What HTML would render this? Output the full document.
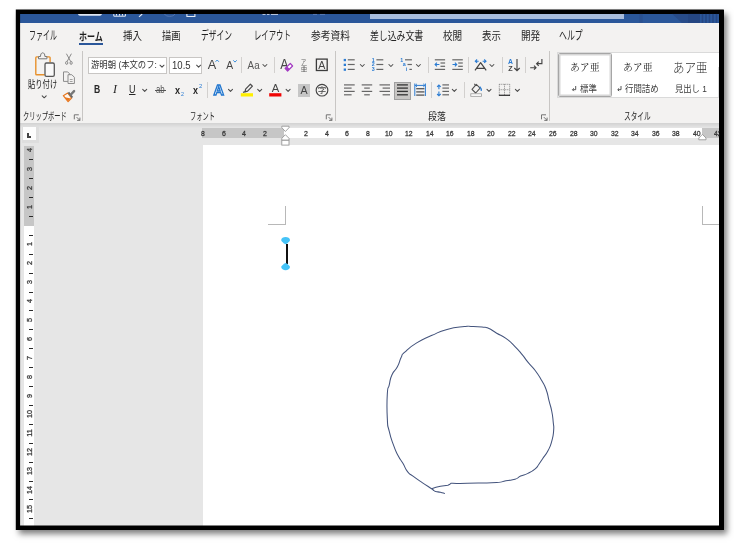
<!DOCTYPE html>
<html lang="ja"><head><meta charset="utf-8"><title>Word</title>
<style>
html,body{margin:0;padding:0;background:#fff;}
body{width:734px;height:545px;overflow:hidden;}
#root{position:relative;width:734px;height:545px;overflow:hidden;background:#fff;will-change:transform;filter:blur(.4px);}
#root div,#root span,#root svg{position:absolute;}
.t{white-space:nowrap;transform-origin:0 50%;color:#262626;display:block;}
.vsep{width:1px;background:#c8c6c4;}
.ui{font-family:"Liberation Sans","Noto Sans CJK JP",sans-serif;}
.serif{font-family:"Liberation Serif","Noto Serif CJK SC","Noto Sans CJK JP",serif;}
.vsep.s{background:#d2d0ce;}
.box{background:#fff;border:1px solid #c8c6c4;box-sizing:border-box;}
.vr{width:16px;height:8px;line-height:8px;font-size:7.2px;text-align:center;color:#3a3a3a;-webkit-text-stroke:.3px #3a3a3a;transform:rotate(-90deg);transform-origin:50% 50%;font-family:"Liberation Sans",sans-serif;display:block;}
#shadow{background:#000;box-shadow:2.5px 3.5px 6px rgba(0,0,0,.5);}
#win{background:#e6e6e6;}
#title{background:#2b579a;}
#search{background:#a9bcdb;}
#ribbon{background:#f3f2f1;}
#ribline{background:linear-gradient(#d2d2d2,#e6e6e6);}
#page{background:#fff;}

</style></head>
<body>
<div id="root">
<div id="shadow" style="left:15.8px;top:9.6px;width:708.0px;height:520.4px;"></div>
<div id="win" style="left:20.1px;top:13.8px;width:699.3px;height:511.8px;"></div>
<div id="title" style="left:20.1px;top:13.8px;width:699.3px;height:9.1px;"></div>
<div id="search" style="left:370px;top:13.8px;width:253.9px;height:5.4px;"></div>
<div id="ribbon" style="left:20.1px;top:22.9px;width:699.3px;height:100.1px;"></div>
<div id="ribline" style="left:20.1px;top:123px;width:699.3px;height:4.5px;"></div>
<div id="page" style="left:203px;top:144.8px;width:516.4px;height:380.8px;"></div>
<div style="left:79.1px;top:42.5px;width:24.2px;height:2.4px;background:#2b579a;"></div>
<div class="vsep" style="left:81.5px;top:50.5px;height:70px;"></div>
<div class="vsep" style="left:334.6px;top:50.5px;height:70px;"></div>
<div class="vsep" style="left:549.2px;top:50.5px;height:70px;"></div>
<div class="vsep s" style="left:241.2px;top:57.2px;height:15.7px;"></div>
<div class="vsep s" style="left:274.3px;top:57.2px;height:15.7px;"></div>
<div class="vsep s" style="left:428.2px;top:57.2px;height:15.7px;"></div>
<div class="vsep s" style="left:468.3px;top:57.2px;height:15.7px;"></div>
<div class="vsep s" style="left:502px;top:57.2px;height:15.7px;"></div>
<div class="vsep s" style="left:524.5px;top:57.2px;height:15.7px;"></div>
<div class="vsep s" style="left:207.2px;top:82.4px;height:15.8px;"></div>
<div class="vsep s" style="left:431.2px;top:82.4px;height:15.8px;"></div>
<div class="vsep s" style="left:464.2px;top:82.4px;height:15.8px;"></div>
<div class="box" style="left:88.3px;top:57px;width:78.5px;height:17.3px;"></div>
<div class="box" style="left:169px;top:57px;width:33.400px;height:17.3px;"></div>
<div style="left:154.8px;top:90.2px;width:11.6px;height:1px;background:#555;"></div>
<div style="left:394.2px;top:81.5px;width:16.4px;height:18px;background:#c8c6c4;border:1px solid #a0a0a0;box-sizing:border-box;"></div>
<div style="left:298.2px;top:84px;width:11.8px;height:12.6px;background:#c6c6c6;"></div>
<div style="left:557.4px;top:52px;width:162.0px;height:46px;background:#fff;border:1px solid #dadada;border-right:0;box-sizing:border-box;"></div>
<div style="left:558.3px;top:53px;width:53.5px;height:44.4px;border:1px solid #a6a6a6;border-radius:1.5px;box-shadow:inset 0 0 0 1.5px #d6d6d6;box-sizing:border-box;"></div>
<div style="left:717.8px;top:66.5px;width:1px;height:31px;background:#dcdcdc;"></div>
<div style="left:202px;top:128.1px;width:517.4px;height:10px;background:#fff;"></div>
<div style="left:202px;top:128.1px;width:82.4px;height:10px;background:#c6c6c6;"></div>
<div style="left:701.8px;top:128.1px;width:17.6px;height:10px;background:#c6c6c6;"></div>
<div style="left:21.8px;top:125.5px;width:17.1px;height:17px;background:#dedede;"></div>
<div style="left:22.8px;top:127.4px;width:13.1px;height:12.5px;background:#fdfdfd;"></div>
<div style="left:27.1px;top:132.7px;width:1.5px;height:4.9px;background:#444;"></div>
<div style="left:27.1px;top:136.1px;width:4.2px;height:1.5px;background:#444;"></div>
<div style="left:24px;top:145.6px;width:10px;height:380.0px;background:#fff;"></div>
<div style="left:24px;top:145.6px;width:10px;height:80.2px;background:#c6c6c6;"></div>
<span class="vr" style="left:22px;top:145.8px;">4</span>
<div style="left:28.8px;top:159px;width:3.8px;height:1px;background:#2a2a2a;"></div>
<span class="vr" style="left:22px;top:164.8px;">3</span>
<div style="left:28.8px;top:178px;width:3.8px;height:1px;background:#2a2a2a;"></div>
<span class="vr" style="left:22px;top:183.6px;">2</span>
<div style="left:28.8px;top:197px;width:3.8px;height:1px;background:#2a2a2a;"></div>
<span class="vr" style="left:22px;top:202.5px;">1</span>
<div style="left:28.8px;top:216px;width:3.8px;height:1px;background:#2a2a2a;"></div>
<span class="vr" style="left:22px;top:240.3px;">1</span>
<div style="left:28.8px;top:235px;width:3.8px;height:1px;background:#2a2a2a;"></div>
<span class="vr" style="left:22px;top:259.2px;">2</span>
<div style="left:28.8px;top:254px;width:3.8px;height:1px;background:#2a2a2a;"></div>
<span class="vr" style="left:22px;top:278.1px;">3</span>
<div style="left:28.8px;top:273px;width:3.8px;height:1px;background:#2a2a2a;"></div>
<span class="vr" style="left:22px;top:297.0px;">4</span>
<div style="left:28.8px;top:292px;width:3.8px;height:1px;background:#2a2a2a;"></div>
<span class="vr" style="left:22px;top:315.9px;">5</span>
<div style="left:28.8px;top:310px;width:3.8px;height:1px;background:#2a2a2a;"></div>
<span class="vr" style="left:22px;top:334.8px;">6</span>
<div style="left:28.8px;top:329px;width:3.8px;height:1px;background:#2a2a2a;"></div>
<span class="vr" style="left:22px;top:353.8px;">7</span>
<div style="left:28.8px;top:348px;width:3.8px;height:1px;background:#2a2a2a;"></div>
<span class="vr" style="left:22px;top:372.6px;">8</span>
<div style="left:28.8px;top:367px;width:3.8px;height:1px;background:#2a2a2a;"></div>
<span class="vr" style="left:22px;top:391.5px;">9</span>
<div style="left:28.8px;top:386px;width:3.8px;height:1px;background:#2a2a2a;"></div>
<span class="vr" style="left:22px;top:410.4px;">10</span>
<div style="left:28.8px;top:405px;width:3.8px;height:1px;background:#2a2a2a;"></div>
<span class="vr" style="left:22px;top:429.3px;">11</span>
<div style="left:28.8px;top:424px;width:3.8px;height:1px;background:#2a2a2a;"></div>
<span class="vr" style="left:22px;top:448.2px;">12</span>
<div style="left:28.8px;top:443px;width:3.8px;height:1px;background:#2a2a2a;"></div>
<span class="vr" style="left:22px;top:467.1px;">13</span>
<div style="left:28.8px;top:462px;width:3.8px;height:1px;background:#2a2a2a;"></div>
<span class="vr" style="left:22px;top:486.0px;">14</span>
<div style="left:28.8px;top:481px;width:3.8px;height:1px;background:#2a2a2a;"></div>
<span class="vr" style="left:22px;top:504.9px;">15</span>
<div style="left:28.8px;top:499px;width:3.8px;height:1px;background:#2a2a2a;"></div>
<div style="left:28.8px;top:518px;width:3.8px;height:1px;background:#2a2a2a;"></div>
<div style="left:285px;top:206px;width:1px;height:19px;background:#b8b8b8;"></div>
<div style="left:268px;top:224.3px;width:18px;height:1px;background:#b8b8b8;"></div>
<div style="left:702px;top:206px;width:1px;height:19px;background:#b8b8b8;"></div>
<div style="left:702px;top:224.3px;width:17.4px;height:1px;background:#b8b8b8;"></div>
<div style="left:285.6px;top:243.5px;width:2px;height:20.5px;background:#111;"></div>
<svg style="left:279px;top:235px;" width="14" height="38" viewBox="0 0 14 38"><path d="M2.200 5.100C2.200 3 4.400 2 6.600 2s4.400 1 4.400 3.100c0 1.300-1.600 2-2.700 3.300L6.600 9.300 4.900 8.400C3.800 7.100 2.200 6.400 2.200 5.100z" fill="#45c3f7"/><path d="M2.200 32.100c0 2.100 2.200 3.100 4.400 3.100s4.400-1 4.400-3.100c0-1.300-1.600-2-2.700-3.300L6.600 27.900l-1.700.9c-1.100 1.300-2.700 2-2.700 3.300z" fill="#45c3f7"/></svg>
<svg style="left:0;top:0;" width="734" height="545" viewBox="0 0 734 545"><path d="M444.5 493.4C443.3 493.1 443.0 492.9 440.4 492.3C437.8 491.7 437.8 492.0 435.7 491.4C433.6 490.8 434.6 491.0 433.4 490.2C432.2 489.4 435.0 491.0 431.6 488.7C428.2 486.4 427.8 486.4 422.2 482.6C416.6 478.8 417.4 479.4 413.0 476.1C408.6 472.8 410.5 475.4 407.5 471.6C404.5 467.8 405.7 468.0 402.9 463.3C400.1 458.6 401.0 461.2 398.3 456.0C395.6 450.8 396.5 453.3 393.8 445.9C391.1 438.5 391.1 439.5 389.2 431.2C387.2 422.9 387.9 429.4 387.3 418.3C386.7 407.2 386.7 404.3 387.3 394.3C387.9 384.3 387.8 390.9 389.2 385.1C390.6 379.3 389.4 380.5 391.9 375.0C394.4 369.5 394.6 372.0 397.4 366.8C400.2 361.6 398.9 362.0 401.1 357.6C403.3 353.2 400.1 356.5 404.8 352.1C409.5 347.7 408.7 347.8 416.7 342.9C424.7 337.9 422.3 339.6 431.4 335.6C440.5 331.6 437.1 332.2 447.0 329.5C456.9 326.8 457.2 327.5 464.4 326.6C471.6 325.7 465.7 326.3 471.0 326.4C476.3 326.5 476.8 326.4 482.0 327.0C487.2 327.6 484.0 326.4 488.4 328.3C492.8 330.2 491.4 330.2 496.7 333.2C501.9 336.2 500.4 334.3 505.9 338.3C511.4 342.3 510.1 341.6 515.0 346.6C520.0 351.6 518.5 350.2 522.4 354.9C526.3 359.6 524.1 357.5 527.9 362.2C531.7 366.9 531.1 365.0 535.2 370.5C539.3 376.0 538.4 374.8 541.7 380.6C545.0 386.4 544.0 383.7 546.2 389.7C548.4 395.7 547.4 394.3 549.0 400.7C550.6 407.1 550.4 404.6 551.7 411.0C553.0 417.4 552.6 415.9 553.2 422.0C553.8 428.1 554.1 425.4 553.6 431.2C553.1 437.0 553.4 435.5 551.7 441.3C550.1 447.1 550.8 445.3 548.1 450.5C545.4 455.7 545.4 454.6 542.6 458.7C539.8 462.8 541.1 461.2 538.9 464.2C536.7 467.2 538.5 466.0 535.2 468.8C531.9 471.6 532.3 471.2 527.9 473.4C523.5 475.6 524.5 474.3 520.6 476.1C516.7 477.9 519.4 477.9 515.0 479.3C510.6 480.7 511.4 479.7 505.9 480.7C500.4 481.7 505.0 481.9 496.7 482.6C488.4 483.3 489.3 482.9 478.3 483.1C467.3 483.3 468.2 483.3 460.0 483.4C451.8 483.5 453.6 483.3 450.9 483.3 M450.9 483.3 L449.4 484.6 L447.9 485.3 L440.4 486.3 L436.0 487.3 L431.6 488.7" fill="none" stroke="#43537c" stroke-width="1.050" stroke-linejoin="round" stroke-linecap="round"/></svg><svg id="tb" style="left:0;top:0;" width="734" height="545" viewBox="0 0 734 545">
<g>
  <path d="M78.100 14h23.700v.2c0 1-1.600 1.600-3.200 1.600H81.300c-1.600 0-3.200-.6-3.200-1.600z" fill="#dfe6f2"/>
  <path d="M113.800 14v2.200h11.600V14M116.500 14v1.600M119.500 14v1.600M122.500 14v1.600" fill="none" stroke="#e6ecf6" stroke-width="1"/>
  <path d="M139 16.800l3.200-2.800" stroke="#e6ecf6" stroke-width="1.100" fill="none"/>
  <path d="M164.500 14c1 1.800 3 2.300 5.200 2.300s4.200-.5 5.200-2.300" stroke="#5577b2" stroke-width="1" fill="none"/>
  <path d="M186.900 14v2.500h8V14" stroke="#e6ecf6" stroke-width="1.100" fill="none"/>
  <path d="M262.500 14.400h3M267 14.400h2.500M271 14.400h7" stroke="#c7d3e8" stroke-width="1" fill="none"/>
  <path d="M313 14.300h4M320 14.300h5" stroke="#6e8cc0" stroke-width=".8" fill="none"/>
  <rect x="639.400" y="13.800" width="3.300" height="9.100" fill="#2a5090"/>
  <path d="M672 13.800h28v9.100H682z" fill="#284c8a"/>
  <rect x="688" y="13.800" width="12" height="9.100" fill="#254682"/>
  <path d="M702.500 13.800v9.100M706 13.800v9.100M709.500 13.800v9.100M713 13.800v9.100M716.500 13.800v9.100" stroke="#254682" stroke-width="1.600" fill="none"/>
</g>
</svg>
<svg id="icons" style="left:0;top:0;" width="734" height="545" viewBox="0 0 734 545" font-family="'Liberation Sans','Noto Sans CJK JP',sans-serif">
<defs>
  <path id="chev" d="M-2 -1L0 1 2 -1" fill="none" stroke="#4a4a4a" stroke-width="1.050" stroke-linecap="round" stroke-linejoin="round"/>
  <g id="launch" fill="none" stroke="#666" stroke-width="0.9"><path d="M0 4.5V0h4.500"/><path d="M2.300 2.300l3.200 3.200M5.600 2.800v2.800H2.800"/></g>
</defs>
<!-- paste -->
<g fill="none">
  <path d="M38.800 56.900h-2.200a.8.800 0 0 0-.8.800v16.300a.8.800 0 0 0 .8.800h8" stroke="#e8912d" stroke-width="1.400"/>
  <path d="M46.800 56.900h2.500a.8.800 0 0 1 .8.800v4.500" stroke="#e8912d" stroke-width="1.400"/>
  <path d="M38.500 58.800v-2.300h2c0-2.300.9-3.700 2.200-3.700s2.200 1.400 2.200 3.700h2v2.300z" stroke="#777" stroke-width="1" fill="#f3f2f1" stroke-linejoin="round"/>
  <rect x="45" y="63" width="9.300" height="13.300" rx="1.400" stroke="#585858" stroke-width="1.300" fill="#f9f9f9"/>
</g>
<use href="#chev" x="44.200" y="96.800"/>
<!-- scissors -->
<g fill="none" stroke="#8a8a8a" stroke-width="1">
  <path d="M66.400 53.700l4.300 7.800M71.400 53.700l-4.300 7.800"/>
  <ellipse cx="66.700" cy="62.900" rx="1.100" ry="1.500"/><ellipse cx="71.100" cy="62.900" rx="1.100" ry="1.500"/>
</g>
<!-- copy -->
<g fill="#f3f2f1" stroke="#8c8c8c" stroke-width="1" stroke-linejoin="round">
  <path d="M63.500 71.900h4.200l2 2v7.500h-6.200z"/>
  <path d="M68 74.700h3.800l2.600 2.600v6.200h-6.400z"/>
  <path d="M69.800 79.500h2.800M69.800 81.500h2.800" stroke-width=".8"/>
</g>
<!-- format painter -->
<g>
  <path d="M63.300 95.700l4.400-2.700 3.900 5.100-3.500 3.500z" fill="#fdf6ee" stroke="#e8761d" stroke-width="1.200" stroke-linejoin="round"/>
  <path d="M64.800 97.300l6 1.100-2.700 2.700z" fill="#e8761d"/>
  <path d="M67.700 93l3.900 5.100 1.500-1.200-3.900-5.100z" fill="#666"/>
  <path d="M70.900 94.500l3.200-3.400" stroke="#777" stroke-width="2.400" stroke-linecap="round" fill="none"/>
</g>
<use href="#launch" x="74.300" y="114.800"/>
<use href="#launch" x="326.300" y="114.800"/>
<use href="#launch" x="541.500" y="114.800"/>
<!-- font box chevrons -->
<use href="#chev" x="162" y="66.200"/>
<use href="#chev" x="198.600" y="66.200"/>
<!-- A^ Av Aa -->
<text x="212" y="69" font-size="13.600" textLength="8.500" lengthAdjust="spacingAndGlyphs" text-anchor="middle" fill="#444">A</text>
<path d="M215.500 61.800l1.700-1.800 1.700 1.800" fill="none" stroke="#3a8fdd" stroke-width="1"/>
<text x="229.700" y="69" font-size="11.200" textLength="6.900" lengthAdjust="spacingAndGlyphs" text-anchor="middle" fill="#444">A</text>
<path d="M233.300 60.300l1.700 1.800 1.700-1.800" fill="none" stroke="#3a8fdd" stroke-width="1"/>
<text x="247.600" y="69" font-size="10.500" textLength="12" lengthAdjust="spacingAndGlyphs" fill="#555">Aa</text>
<use href="#chev" x="264.900" y="65.500"/>
<!-- clear formatting -->
<text x="284.300" y="69" font-size="14" textLength="8.300" lengthAdjust="spacingAndGlyphs" text-anchor="middle" fill="#484848">A</text>
<path d="M290.300 63.500l2.300 2.500-5 5-2.500-2.600z" fill="#fff" stroke="#a33bc2" stroke-width="1.200" stroke-linejoin="round"/>
<path d="M287.200 66.400l2.500 2.500-2.100 2.100-2.500-2.600z" fill="#a33bc2"/>
<!-- phonetic guide -->
<text x="303.500" y="64.300" font-size="5.500" text-anchor="middle" fill="#666">ア</text>
<text x="304" y="71" font-size="6.500" text-anchor="middle" fill="#666">亜</text>
<!-- boxed A -->
<rect x="316.400" y="59.100" width="10.800" height="11.400" fill="none" stroke="#3c3c3c" stroke-width="1.300"/>
<text x="321.900" y="68.700" font-size="10.600" text-anchor="middle" fill="#444">A</text>
<!-- U chevron -->
<use href="#chev" x="144.700" y="90.400"/>
<!-- text effects A -->
<text x="218.800" y="94.800" font-size="14.500" font-weight="bold" text-anchor="middle" fill="#fff" stroke="#2277cf" stroke-width="1.300">A</text>
<use href="#chev" x="230.500" y="90.400"/>
<!-- highlighter -->
<path d="M245 91.800l.6-2.600 4.800-5 2 1.900-4.800 5z" fill="none" stroke="#484848" stroke-width="1.200" stroke-linejoin="round"/>
<path d="M243 92.400l2-.6" stroke="#484848" stroke-width="1.200"/>
<rect x="240.800" y="93.200" width="12.200" height="3.300" fill="#ffef00"/>
<use href="#chev" x="259.700" y="90.400"/>
<!-- font color -->
<text x="275.600" y="92.300" font-size="11.200" text-anchor="middle" fill="#444">A</text>
<rect x="269.200" y="93.200" width="12.200" height="3.300" fill="#f00505"/>
<use href="#chev" x="288.100" y="90.400"/>
<!-- shaded A -->
<text x="304.100" y="94" font-size="10.600" text-anchor="middle" fill="#444">A</text>
<!-- circled char -->
<circle cx="322" cy="90.200" r="5.850" fill="none" stroke="#444" stroke-width="1.150"/>
<text x="322" y="93.400" font-size="8.500" text-anchor="middle" fill="#444">字</text>
</svg>
<svg id="icons2" style="left:0;top:0;" width="734" height="545" viewBox="0 0 734 545" font-family="'Liberation Sans','Noto Sans CJK JP',sans-serif">
<rect x="343.700" y="58.9" width="2.300" height="2.300" fill="#2b7cd3"/>
<path d="M347.8 59.8H354.7" stroke="#666" stroke-width="1.2" fill="none"/>
<rect x="343.700" y="63.7" width="2.300" height="2.300" fill="#2b7cd3"/>
<path d="M347.8 64.5H354.7" stroke="#666" stroke-width="1.2" fill="none"/>
<rect x="343.700" y="68.5" width="2.300" height="2.300" fill="#2b7cd3"/>
<path d="M347.8 69.4H354.7" stroke="#666" stroke-width="1.2" fill="none"/>
<use href="#chev" x="362.3" y="65.500"/>
<text x="373.200" y="61.5" font-size="5.300" font-weight="bold" text-anchor="middle" fill="#2b7cd3">1</text>
<path d="M376.4 59.8H383.3" stroke="#666" stroke-width="1.2" fill="none"/>
<text x="373.200" y="66.3" font-size="5.300" font-weight="bold" text-anchor="middle" fill="#2b7cd3">2</text>
<path d="M376.4 64.5H383.3" stroke="#666" stroke-width="1.2" fill="none"/>
<text x="373.200" y="71.1" font-size="5.300" font-weight="bold" text-anchor="middle" fill="#2b7cd3">3</text>
<path d="M376.4 69.4H383.3" stroke="#666" stroke-width="1.2" fill="none"/>
<use href="#chev" x="390.9" y="65.500"/>
<text x="401.800" y="61.5" font-size="5.300" font-weight="bold" text-anchor="middle" fill="#2b7cd3">1</text>
<path d="M405.0 59.8H411.9" stroke="#666" stroke-width="1.2" fill="none"/>
<text x="404.200" y="66.3" font-size="5.300" font-weight="bold" text-anchor="middle" fill="#2b7cd3">a</text>
<path d="M407.5 64.5H411.9" stroke="#666" stroke-width="1.2" fill="none"/>
<text x="406.600" y="71.1" font-size="5.300" font-weight="bold" text-anchor="middle" fill="#2b7cd3">i</text>
<path d="M409.4 69.4H411.9" stroke="#666" stroke-width="1.2" fill="none"/>
<use href="#chev" x="418.4" y="65.500"/>
<path d="M434.8 59.8H445.1" stroke="#666" stroke-width="1.2" fill="none"/>
<path d="M434.8 69.4H445.1" stroke="#666" stroke-width="1.2" fill="none"/>
<path d="M440.5 63.0H445.1" stroke="#666" stroke-width="1.2" fill="none"/>
<path d="M440.5 66.3H445.1" stroke="#666" stroke-width="1.2" fill="none"/>
<path d="M439.400 64.500h-4.200M436.900 62.700l-1.800 1.800 1.800 1.800" stroke="#2b7cd3" stroke-width="1.100" fill="none"/>
<path d="M452.3 59.8H462.8" stroke="#666" stroke-width="1.2" fill="none"/>
<path d="M452.3 69.4H462.8" stroke="#666" stroke-width="1.2" fill="none"/>
<path d="M458.2 63.0H462.8" stroke="#666" stroke-width="1.2" fill="none"/>
<path d="M458.2 66.3H462.8" stroke="#666" stroke-width="1.2" fill="none"/>
<path d="M452.500 64.500h4.200M454.900 62.700l1.800 1.800-1.800 1.800" stroke="#2b7cd3" stroke-width="1.100" fill="none"/>
<path d="M475 70.400l5.600-7.700 5.600 7.700M476.700 68.400h7.800" stroke="#444" stroke-width="1.200" fill="none" stroke-linejoin="round"/>
<path d="M475.300 61.200h3.400M486 61.200h-3.400M477.100 59.500l-1.800 1.700 1.800 1.700M484.200 59.500l1.800 1.700-1.800 1.700" stroke="#2b7cd3" stroke-width="1.100" fill="none"/>
<use href="#chev" x="491.9" y="65.500"/>
<text x="510.400" y="64" font-size="6.800" font-weight="bold" text-anchor="middle" fill="#2b7cd3">A</text>
<text x="510.400" y="71.300" font-size="7.200" font-weight="bold" text-anchor="middle" fill="#444">Z</text>
<path d="M517 58.900v11.700M514.300 68l2.700 2.700 2.700-2.700" stroke="#444" stroke-width="1.150" fill="none"/>
<path d="M530.200 67.700h5.800M534 65.700l2 2-2 2" stroke="#444" stroke-width="1.150" fill="none"/>
<path d="M541.900 59.100v4.600h-5.300M538.700 61.600l-2.100 2.100 2.100 2.100" stroke="#444" stroke-width="1.150" fill="none"/>
<path d="M344.0 84.9H354.7" stroke="#666" stroke-width="1.2" fill="none"/>
<path d="M361.7 84.9H372.2" stroke="#666" stroke-width="1.2" fill="none"/>
<path d="M379.5 84.9H390.0" stroke="#666" stroke-width="1.2" fill="none"/>
<path d="M397.0 84.9H407.9" stroke="#333" stroke-width="1.3" fill="none"/>
<path d="M344.0 88.1H351.6" stroke="#666" stroke-width="1.2" fill="none"/>
<path d="M364.2 88.1H369.8" stroke="#666" stroke-width="1.2" fill="none"/>
<path d="M382.6 88.1H390.0" stroke="#666" stroke-width="1.2" fill="none"/>
<path d="M397.0 88.1H407.9" stroke="#333" stroke-width="1.3" fill="none"/>
<path d="M344.0 91.4H354.7" stroke="#666" stroke-width="1.2" fill="none"/>
<path d="M361.7 91.4H372.2" stroke="#666" stroke-width="1.2" fill="none"/>
<path d="M379.5 91.4H390.0" stroke="#666" stroke-width="1.2" fill="none"/>
<path d="M397.0 91.4H407.9" stroke="#333" stroke-width="1.3" fill="none"/>
<path d="M344.0 94.8H351.6" stroke="#666" stroke-width="1.2" fill="none"/>
<path d="M364.2 94.8H369.8" stroke="#666" stroke-width="1.2" fill="none"/>
<path d="M382.6 94.8H390.0" stroke="#666" stroke-width="1.2" fill="none"/>
<path d="M397.0 94.8H407.9" stroke="#333" stroke-width="1.3" fill="none"/>
<path d="M414.800 83.500v12.500M425.400 83.500v12.500M415.300 85.400h9.600M416.900 83.900l-1.600 1.500 1.600 1.500M423.300 83.900l1.600 1.500-1.600 1.500" stroke="#2b7cd3" stroke-width="1" fill="none"/>
<path d="M416.2 88.7H424.4" stroke="#555" stroke-width="1.300" fill="none"/>
<path d="M416.2 91.9H424.4" stroke="#555" stroke-width="1.300" fill="none"/>
<path d="M416.2 95.1H424.4" stroke="#555" stroke-width="1.300" fill="none"/>
<path d="M438.900 85v4.300M438.900 91.500v4.300M437.100 86.800l1.800-1.800 1.800 1.800M437.100 94l1.800 1.800 1.800-1.800" stroke="#2b7cd3" stroke-width="1.100" fill="none"/>
<path d="M442.4 84.9H449.0" stroke="#666" stroke-width="1.2" fill="none"/>
<path d="M442.4 88.1H449.0" stroke="#666" stroke-width="1.2" fill="none"/>
<path d="M442.4 91.4H449.0" stroke="#666" stroke-width="1.2" fill="none"/>
<path d="M442.4 94.8H449.0" stroke="#666" stroke-width="1.2" fill="none"/>
<use href="#chev" x="454.3" y="90.4"/>
<path d="M472 89.300l4.300-4.900 3.800 3.700-4.400 4.900z" stroke="#505050" stroke-width="1.100" fill="#f3f2f1" stroke-linejoin="round"/>
<path d="M475.400 85.400l-1-1.600" stroke="#505050" stroke-width="1.100" fill="none"/>
<path d="M479.800 86.600c1.200 1.300 1.700 2.800 1.400 4.200" stroke="#2b7cd3" stroke-width="1.300" fill="none"/>
<rect x="470.800" y="93.800" width="10.600" height="2.500" fill="#fff" stroke="#999" stroke-width=".8"/>
<use href="#chev" x="489" y="90.4"/>
<path d="M499.300 84.300h10.400M499.300 84.300v11M509.700 84.300v11M504.500 84.300v11M499.300 89.700h10.400" stroke="#777" stroke-width=".9" stroke-dasharray="1 1" fill="none"/>
<path d="M498.9 95.3H510.0" stroke="#333" stroke-width="1.3" fill="none"/>
<use href="#chev" x="517.4" y="90.4"/>
<path d="M575.7 86v3.700h-3M573.8 88.300l-1.400 1.400 1.400 1.400" stroke="#444" stroke-width=".9" fill="none"/>
<path d="M621.0 86v3.700h-3M619.1 88.300l-1.400 1.400 1.400 1.400" stroke="#444" stroke-width=".9" fill="none"/>
<path d="M281.800 126.200h7.200v1.500l-3.600 3.800-3.600-3.800z" fill="#fff" stroke="#999" stroke-width=".9" stroke-linejoin="round"/>
<path d="M281.800 140.200v-1.900l3.600-3.600 3.600 3.600v1.900z" fill="#fff" stroke="#999" stroke-width=".9" stroke-linejoin="round"/>
<rect x="281.800" y="140.300" width="7.200" height="4.800" fill="#fff" stroke="#999" stroke-width=".9"/>
<path d="M698.800 139.800v-1.800l3.600-3.600 3.600 3.600v1.800z" fill="#fff" stroke="#999" stroke-width=".9" stroke-linejoin="round"/>
</svg>
<span class="t ui" id="t0" style="left:29.4px;top:28.40px;font-size:12.4px;line-height:16.4px;transform:scaleX(0.5629);">ファイル</span>
<span class="t ui" id="t1" style="left:79.2px;top:29.50px;font-size:10.8px;line-height:14.8px;transform:scaleX(0.7451);font-weight:bold;color:#1f1f1f;">ホーム</span>
<span class="t ui" id="t2" style="left:123.4px;top:28.95px;font-size:11.5px;line-height:15.5px;transform:scaleX(0.8217);">挿入</span>
<span class="t ui" id="t3" style="left:162.4px;top:28.95px;font-size:11.5px;line-height:15.5px;transform:scaleX(0.8000);">描画</span>
<span class="t ui" id="t4" style="left:201.4px;top:28.20px;font-size:12.2px;line-height:16.2px;transform:scaleX(0.6379);">デザイン</span>
<span class="t ui" id="t5" style="left:253.5px;top:28.20px;font-size:12.2px;line-height:16.2px;transform:scaleX(0.6039);">レイアウト</span>
<span class="t ui" id="t6" style="left:311px;top:28.95px;font-size:11.5px;line-height:15.5px;transform:scaleX(0.8478);">参考資料</span>
<span class="t ui" id="t7" style="left:369.7px;top:28.95px;font-size:11.5px;line-height:15.5px;transform:scaleX(0.7710);">差し込み文書</span>
<span class="t ui" id="t8" style="left:442.9px;top:28.95px;font-size:11.5px;line-height:15.5px;transform:scaleX(0.8348);">校閲</span>
<span class="t ui" id="t9" style="left:482.1px;top:28.95px;font-size:11.5px;line-height:15.5px;transform:scaleX(0.8217);">表示</span>
<span class="t ui" id="t10" style="left:521px;top:28.95px;font-size:11.5px;line-height:15.5px;transform:scaleX(0.8348);">開発</span>
<span class="t ui" id="t11" style="left:559.4px;top:28.20px;font-size:12.2px;line-height:16.2px;transform:scaleX(0.6482);">ヘルプ</span>
<span class="t ui" id="t12" style="left:27.6px;top:78.30px;font-size:10px;line-height:14px;transform:scaleX(0.7300);color:#1a1a1a;">貼り付け</span>
<span class="t ui" id="t13" style="left:23.4px;top:109.80px;font-size:10.4px;line-height:14.4px;transform:scaleX(0.6022);">クリップボード</span>
<span class="t ui" id="t14" style="left:90.7px;top:59.20px;font-size:9.2px;line-height:13.2px;transform:scaleX(0.9092);color:#333;">游明朝 (本文のフ:</span>
<span class="t ui" id="t15" style="left:171.7px;top:58.90px;font-size:10px;line-height:14px;transform:scaleX(0.9554);color:#333;">10.5</span>
<span class="t ui" id="t16" style="left:190.4px;top:109.80px;font-size:10.4px;line-height:14.4px;transform:scaleX(0.5991);">フォント</span>
<span class="t ui" id="t17" style="left:428.1px;top:109.80px;font-size:10.4px;line-height:14.4px;transform:scaleX(0.8565);">段落</span>
<span class="t ui" id="t18" style="left:624.2px;top:109.80px;font-size:10.4px;line-height:14.4px;transform:scaleX(0.6400);">スタイル</span>
<span class="t ui" id="t19" style="left:93.7px;top:82.20px;font-size:10.8px;line-height:14.8px;transform:scaleX(0.7936);font-weight:bold;">B</span>
<span class="t serif" id="t20" style="left:112.5px;top:82.25px;font-size:11.5px;line-height:15.5px;transform:scaleX(1.0407);font-style:italic;">I</span>
<span class="t ui" id="t21" style="left:128.5px;top:82.00px;font-size:11px;line-height:15px;transform:scaleX(0.8173);text-decoration:underline;">U</span>
<span class="t ui" id="t22" style="left:156.3px;top:83.30px;font-size:10px;line-height:14px;transform:scaleX(0.7820);color:#555;">ab</span>
<span class="t ui" id="t23" style="left:175.4px;top:82.50px;font-size:11px;line-height:15px;transform:scaleX(0.8327);font-weight:bold;">x</span>
<span class="t ui" id="t24" style="left:181px;top:89.00px;font-size:6px;line-height:10px;transform:scaleX(0.8972);color:#2b7cd3;">2</span>
<span class="t ui" id="t25" style="left:193px;top:83.00px;font-size:11px;line-height:15px;transform:scaleX(0.8163);font-weight:bold;">x</span>
<span class="t ui" id="t26" style="left:198.5px;top:80.50px;font-size:6px;line-height:10px;transform:scaleX(0.9869);color:#2b7cd3;">2</span>
<span class="t serif" id="t27" style="left:570.2px;top:61.45px;font-size:10.3px;line-height:14.3px;transform:scaleX(0.9582);color:#1c1c1c;">あア亜</span>
<span class="t ui" id="t28" style="left:580.2px;top:81.55px;font-size:9.5px;line-height:13.5px;transform:scaleX(0.8887);color:#3a3a3a;">標準</span>
<span class="t serif" id="t29" style="left:623.2px;top:61.45px;font-size:10.3px;line-height:14.3px;transform:scaleX(0.9582);color:#1c1c1c;">あア亜</span>
<span class="t ui" id="t30" style="left:625px;top:81.55px;font-size:9.5px;line-height:13.5px;transform:scaleX(0.8838);color:#3a3a3a;">行間詰め</span>
<span class="t ui" id="t31" style="left:673.2px;top:59.40px;font-size:13px;line-height:17px;transform:scaleX(0.8868);font-weight:300;color:#333;">あア亜</span>
<span class="t ui" id="t32" style="left:675px;top:81.55px;font-size:9.5px;line-height:13.5px;transform:scaleX(0.8727);color:#3a3a3a;">見出し 1</span>
<span class="t ui" id="t33" style="left:201.4px;top:127.90px;font-size:7.6px;line-height:11.6px;transform:scaleX(0.8974);color:#3a3a3a;-webkit-text-stroke:.3px #3a3a3a;">8</span>
<span class="t ui" id="t34" style="left:221.9px;top:127.90px;font-size:7.6px;line-height:11.6px;transform:scaleX(0.9210);color:#3a3a3a;-webkit-text-stroke:.3px #3a3a3a;">6</span>
<span class="t ui" id="t35" style="left:242.4px;top:127.90px;font-size:7.6px;line-height:11.6px;transform:scaleX(0.9210);color:#3a3a3a;-webkit-text-stroke:.3px #3a3a3a;">4</span>
<span class="t ui" id="t36" style="left:262.9px;top:127.90px;font-size:7.6px;line-height:11.6px;transform:scaleX(0.9210);color:#3a3a3a;-webkit-text-stroke:.3px #3a3a3a;">2</span>
<span class="t ui" id="t37" style="left:304.2px;top:127.90px;font-size:7.6px;line-height:11.6px;transform:scaleX(0.9210);color:#3a3a3a;-webkit-text-stroke:.3px #3a3a3a;">2</span>
<span class="t ui" id="t38" style="left:324.7px;top:127.90px;font-size:7.6px;line-height:11.6px;transform:scaleX(0.9210);color:#3a3a3a;-webkit-text-stroke:.3px #3a3a3a;">4</span>
<span class="t ui" id="t39" style="left:345.2px;top:127.90px;font-size:7.6px;line-height:11.6px;transform:scaleX(0.9210);color:#3a3a3a;-webkit-text-stroke:.3px #3a3a3a;">6</span>
<span class="t ui" id="t40" style="left:365.8px;top:127.90px;font-size:7.6px;line-height:11.6px;transform:scaleX(0.8974);color:#3a3a3a;-webkit-text-stroke:.3px #3a3a3a;">8</span>
<span class="t ui" id="t41" style="left:384.5px;top:127.90px;font-size:7.6px;line-height:11.6px;transform:scaleX(0.8991);color:#3a3a3a;-webkit-text-stroke:.3px #3a3a3a;">10</span>
<span class="t ui" id="t42" style="left:405.1px;top:127.90px;font-size:7.6px;line-height:11.6px;transform:scaleX(0.8991);color:#3a3a3a;-webkit-text-stroke:.3px #3a3a3a;">12</span>
<span class="t ui" id="t43" style="left:425.6px;top:127.90px;font-size:7.6px;line-height:11.6px;transform:scaleX(0.8991);color:#3a3a3a;-webkit-text-stroke:.3px #3a3a3a;">14</span>
<span class="t ui" id="t44" style="left:446.2px;top:127.90px;font-size:7.6px;line-height:11.6px;transform:scaleX(0.8991);color:#3a3a3a;-webkit-text-stroke:.3px #3a3a3a;">16</span>
<span class="t ui" id="t45" style="left:466.7px;top:127.90px;font-size:7.6px;line-height:11.6px;transform:scaleX(0.8991);color:#3a3a3a;-webkit-text-stroke:.3px #3a3a3a;">18</span>
<span class="t ui" id="t46" style="left:487.3px;top:127.90px;font-size:7.6px;line-height:11.6px;transform:scaleX(0.8991);color:#3a3a3a;-webkit-text-stroke:.3px #3a3a3a;">20</span>
<span class="t ui" id="t47" style="left:507.9px;top:127.90px;font-size:7.6px;line-height:11.6px;transform:scaleX(0.8991);color:#3a3a3a;-webkit-text-stroke:.3px #3a3a3a;">22</span>
<span class="t ui" id="t48" style="left:528.4px;top:127.90px;font-size:7.6px;line-height:11.6px;transform:scaleX(0.8991);color:#3a3a3a;-webkit-text-stroke:.3px #3a3a3a;">24</span>
<span class="t ui" id="t49" style="left:549.0px;top:127.90px;font-size:7.6px;line-height:11.6px;transform:scaleX(0.8991);color:#3a3a3a;-webkit-text-stroke:.3px #3a3a3a;">26</span>
<span class="t ui" id="t50" style="left:569.5px;top:127.90px;font-size:7.6px;line-height:11.6px;transform:scaleX(0.8991);color:#3a3a3a;-webkit-text-stroke:.3px #3a3a3a;">28</span>
<span class="t ui" id="t51" style="left:590.1px;top:127.90px;font-size:7.6px;line-height:11.6px;transform:scaleX(0.8991);color:#3a3a3a;-webkit-text-stroke:.3px #3a3a3a;">30</span>
<span class="t ui" id="t52" style="left:610.7px;top:127.90px;font-size:7.6px;line-height:11.6px;transform:scaleX(0.8991);color:#3a3a3a;-webkit-text-stroke:.3px #3a3a3a;">32</span>
<span class="t ui" id="t53" style="left:631.2px;top:127.90px;font-size:7.6px;line-height:11.6px;transform:scaleX(0.8991);color:#3a3a3a;-webkit-text-stroke:.3px #3a3a3a;">34</span>
<span class="t ui" id="t54" style="left:651.8px;top:127.90px;font-size:7.6px;line-height:11.6px;transform:scaleX(0.8991);color:#3a3a3a;-webkit-text-stroke:.3px #3a3a3a;">36</span>
<span class="t ui" id="t55" style="left:672.3px;top:127.90px;font-size:7.6px;line-height:11.6px;transform:scaleX(0.8991);color:#3a3a3a;-webkit-text-stroke:.3px #3a3a3a;">38</span>
<span class="t ui" id="t56" style="left:692.9px;top:127.90px;font-size:7.6px;line-height:11.6px;transform:scaleX(0.8991);color:#3a3a3a;-webkit-text-stroke:.3px #3a3a3a;">40</span>
<span class="t ui" id="t57" style="left:713.5px;top:127.90px;font-size:7.6px;line-height:11.6px;transform:scaleX(0.8991);color:#3a3a3a;-webkit-text-stroke:.3px #3a3a3a;">42</span>
<svg id="frameov" style="left:0;top:0;z-index:50;" width="734" height="545" viewBox="0 0 734 545"><path fill-rule="evenodd" d="M15.8 9.6H723.8V530.0H15.8z M20.1 13.8V525.6H719.4V13.8z" fill="#000"/><path fill-rule="evenodd" d="M723.8 0H734V545H723.8z" fill="none"/></svg>
</div>
</body></html>
